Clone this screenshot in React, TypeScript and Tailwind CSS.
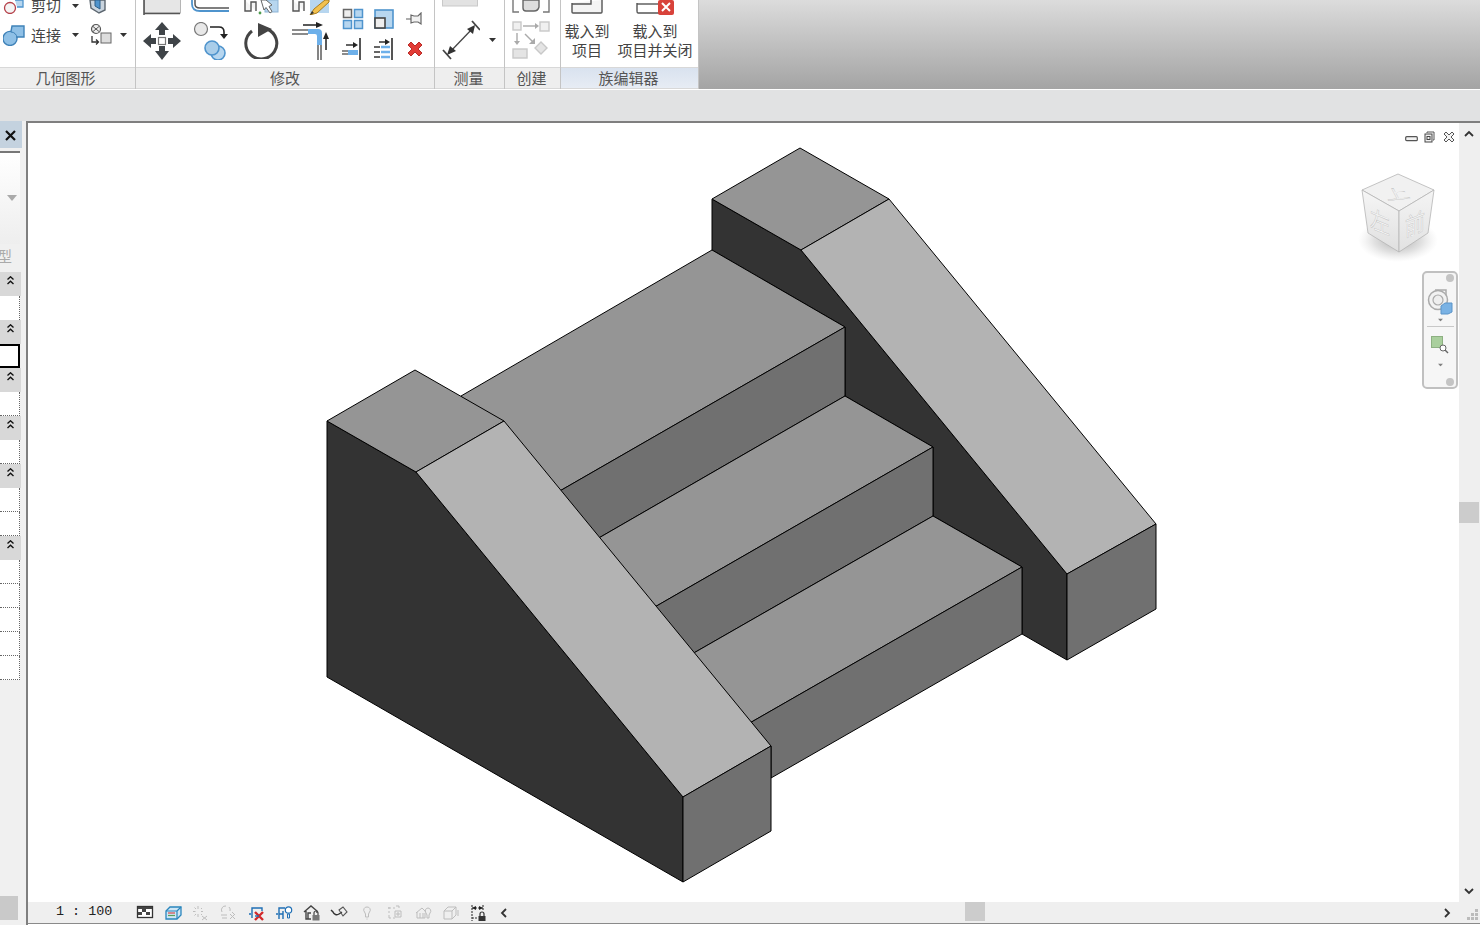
import React from "react";

const DARK = "#3f4448";
const BLUE = "#4f94cd";
const LBLUE = "#b7d6ef";

type P = { children: React.ReactNode; w: number; h: number; vb?: string; className?: string };
const Ic = ({ children, w, h, vb, className }: P) => (
  <svg width={w} height={h} viewBox={vb ?? `0 0 ${w} ${h}`} className={`block shrink-0 ${className ?? ""}`}>
    {children}
  </svg>
);

const Caret = ({ className }: { className?: string }) => (
  <svg width="7" height="4" viewBox="0 0 7 4" className={`block shrink-0 ${className ?? ""}`}>
    <path d="M0 0H7L3.5 4Z" fill="#333" />
  </svg>
);

const CutIcon = () => (
  <Ic w={22} h={14}>
    <circle cx="7" cy="8" r="5.5" fill="#f4f4f4" stroke="#b5414a" strokeWidth="1.3" />
    <path d="M12 0H20V7H14" fill={LBLUE} stroke={BLUE} strokeWidth="1.3" />
  </Ic>
);
const JoinIcon = () => (
  <Ic w={22} h={22}>
    <path d="M9 2H21V13H14V14A7 7 0 1 1 8 7.5Z" fill="#8fc0e6" stroke="#3f82b8" strokeWidth="1.4" />
    <path d="M8 8A6 6 0 0 1 14 14" fill="none" stroke="#3f82b8" strokeWidth="1" />
  </Ic>
);
const WallCutIcon = () => (
  <Ic w={20} h={14}>
    <path d="M2 0L3 8L11 13L17 10V0Z" fill="#c9d4de" stroke="#5d6770" strokeWidth="1.4" />
    <path d="M7 0V6L12 9V0Z" fill={BLUE} stroke="#2e5f88" strokeWidth="1" />
  </Ic>
);
const SplitFaceIcon = () => (
  <Ic w={22} h={24}>
    <circle cx="6" cy="6" r="4.5" fill="#eee" stroke="#555" strokeWidth="1.2" />
    <path d="M3 3.5L9 8.5M9 3.5L3 8.5" stroke="#555" />
    <rect x="11" y="10" width="10" height="10" fill="#ddd" stroke="#666" />
    <path d="M2 13V19H8M6 16.5L8.5 19L6 21.5" fill="none" stroke="#333" strokeWidth="1.3" />
  </Ic>
);

const AlignIcon = () => (
  <Ic w={38} h={15}>
    <rect x="1.5" y="-4" width="36" height="17" fill="#e6e6e6" stroke="#b5b5b5" />
    <path d="M1 0V15M1 13.5H37" stroke="#555" strokeWidth="1.6" fill="none" />
  </Ic>
);
const OffsetIcon = () => (
  <Ic w={38} h={15}>
    <path d="M4 0V4Q4 8 9 8H38" fill="none" stroke="#555" strokeWidth="1.5" />
    <path d="M1 0V4Q1 11 9 11H38" fill="none" stroke={BLUE} strokeWidth="1.8" />
  </Ic>
);
const MirrorPickIcon = () => (
  <Ic w={36} h={16}>
    <path d="M1 0V11H7V2H12V11" fill="#f4f4f4" stroke="#555" strokeWidth="1.4" />
    <rect x="21" y="0" width="13" height="12" fill={LBLUE} stroke="#8cb3d4" />
    <path d="M17 0L20 10L22 7.5L26 13L28 11.5L25 6.5L28 5L22 0Z" fill="#fff" stroke="#666" />
    <circle cx="16" cy="13" r="1.4" fill="#4e9c4e" />
  </Ic>
);
const MirrorDrawIcon = () => (
  <Ic w={38} h={15}>
    <path d="M1 0V11H7V2H12V11" fill="#f4f4f4" stroke="#555" strokeWidth="1.4" />
    <rect x="18" y="0" width="19" height="13" fill={LBLUE} />
    <path d="M33 0L22 9L18 15L25 13L37 2V0Z" fill="#f2c14e" stroke="#a97d1e" />
    <path d="M18 15L20 11L22 13Z" fill="#333" />
  </Ic>
);

const MoveIcon = () => (
  <Ic w={38} h={38}>
    <g fill={DARK}>
      <path d="M19 0L26 8H22V13H16V8H12Z" />
      <path d="M19 38L12 29H16V24H22V29H26Z" />
      <path d="M0 19L8 12V16H13V22H8V26Z" />
      <path d="M38 19L30 12V16H25V22H30V26Z" />
    </g>
    <rect x="15.5" y="15.5" width="7" height="7" fill="#fff" stroke="#777" strokeWidth="1.2" />
  </Ic>
);
const CopyIcon = () => (
  <Ic w={38} h={38}>
    <circle cx="9" cy="7" r="6.5" fill="#e8e8e8" stroke="#777" strokeWidth="1.2" />
    <path d="M18 5H27Q32 5 32 10V13" fill="none" stroke="#222" strokeWidth="1.6" />
    <path d="M28 12H36L32 17Z" fill="#222" />
    <circle cx="26" cy="31" r="7" fill={LBLUE} stroke={BLUE} strokeWidth="1.6" />
    <circle cx="20" cy="26" r="7" fill="#a9cde9" stroke={BLUE} strokeWidth="1.6" />
  </Ic>
);
const RotateIcon = () => (
  <Ic w={36} h={37}>
    <path d="M9 9A15.5 15.5 0 1 0 24 7" fill="none" stroke="#444" strokeWidth="3" />
    <path d="M15 1L29 7L15 15Z" fill="#444" />
  </Ic>
);
const TrimIcon = () => (
  <Ic w={40} h={38}>
    <path d="M0 8H16M0 12H16" stroke="#666" strokeWidth="1.6" />
    <path d="M16 7H26Q30 7 30 11V23H25V14Q25 12 23 12H16Z" fill="#6db0ea" />
    <path d="M26 23V38M29 23V38" stroke="#666" strokeWidth="1.6" />
    <path d="M11 3H26" stroke="#222" strokeWidth="1.5" />
    <path d="M24 0L31 3L24 6Z" fill="#222" />
    <path d="M34 14V28" stroke="#222" strokeWidth="1.5" />
    <path d="M31 17L34 10L37 17Z" fill="#222" />
  </Ic>
);
const ArrayIcon = () => (
  <Ic w={22} h={22}>
    <rect x="1.5" y="1.5" width="8" height="8" fill="#eee" stroke="#666" strokeWidth="1.5" />
    <rect x="12.5" y="1.5" width="8" height="8" fill={LBLUE} stroke={BLUE} strokeWidth="1.5" />
    <rect x="1.5" y="12.5" width="8" height="8" fill={LBLUE} stroke={BLUE} strokeWidth="1.5" />
    <rect x="12.5" y="12.5" width="8" height="8" fill={LBLUE} stroke={BLUE} strokeWidth="1.5" />
  </Ic>
);
const ScaleIcon = () => (
  <Ic w={20} h={20}>
    <rect x="1" y="1" width="18" height="18" fill={LBLUE} stroke={BLUE} strokeWidth="1.6" />
    <rect x="1" y="9" width="10" height="10" fill="#eee" stroke="#444" strokeWidth="1.6" />
  </Ic>
);
const PinIcon = () => (
  <Ic w={17} h={14}>
    <path d="M0 7H5" stroke="#777" strokeWidth="1.2" />
    <path d="M5 3L8 4H12L15 1V12L12 10H8L5 11Z" fill="#f2f2f2" stroke="#666" strokeWidth="1.2" />
  </Ic>
);
const TrimSingleIcon = () => (
  <Ic w={20} h={22}>
    <path d="M18 0V22" stroke="#555" strokeWidth="2" />
    <path d="M4 7H13" stroke="#222" strokeWidth="1.4" />
    <path d="M11 4L16 7L11 10Z" fill="#222" />
    <path d="M0 13H6M0 16H6" stroke="#666" strokeWidth="1.5" />
    <rect x="6" y="12" width="10" height="5" fill="#6db0ea" />
  </Ic>
);
const TrimMultiIcon = () => (
  <Ic w={20} h={22}>
    <path d="M18 0V22" stroke="#555" strokeWidth="2" />
    <path d="M5 4H13" stroke="#222" strokeWidth="1.4" />
    <path d="M11 1L16 4L11 7Z" fill="#222" />
    <path d="M0 9H6M0 14H6M0 19H6" stroke="#666" strokeWidth="1.8" />
    <path d="M7 9H16M7 14H16M7 19H16" stroke="#6db0ea" strokeWidth="2.5" />
  </Ic>
);
const DeleteIcon = () => (
  <Ic w={18} h={18}>
    <path d="M2 5L5 2L9 6L13 2L16 5L12 9L16 13L13 16L9 12L5 16L2 13L6 9Z" fill="#e23c36" stroke="#b92c28" />
  </Ic>
);
const MeasureTopIcon = () => (
  <Ic w={36} h={7}>
    <rect x="0.5" y="-4" width="35" height="10" fill="#e2e2e2" stroke="#c9c9c9" />
  </Ic>
);
const MeasureIcon = () => (
  <Ic w={38} h={40}>
    <path d="M30 1L38 10M1 30L9 39" stroke="#444" strokeWidth="1.8" />
    <path d="M7 33L32 7" stroke="#444" strokeWidth="1.3" />
    <path d="M33 5L31 14L25 9Z" fill="#333" />
    <path d="M5 35L8 26L14 31Z" fill="#333" />
  </Ic>
);
const CreateTopIcon = () => (
  <Ic w={38} h={14}>
    <path d="M1 0V12H7M37 0V12H31" fill="none" stroke="#777" strokeWidth="1.4" />
    <path d="M11 0V8Q11 11 14 11H22Q26 11 27 7V0Z" fill="#ddd" stroke="#666" strokeWidth="1.4" />
  </Ic>
);
const CreateIcon = () => (
  <Ic w={38} h={38}>
    <g fill="#f0f0f0" stroke="#c8c8c8" strokeWidth="1.4">
      <rect x="1" y="1" width="8" height="8" />
      <rect x="28" y="1" width="9" height="9" />
      <rect x="1" y="28" width="14" height="9" fill="#e4e4e4" />
      <path d="M29 21L35 27L29 33L23 27Z" fill="#e4e4e4" />
    </g>
    <g stroke="#aaa" strokeWidth="1.4" fill="#aaa">
      <path d="M11 5H24" fill="none" />
      <path d="M23 2L27 5L23 8Z" stroke="none" />
      <path d="M5 12V21" fill="none" />
      <path d="M2 20L5 24L8 20Z" stroke="none" />
      <path d="M13 13L22 22" fill="none" />
      <path d="M23 17V23H17Z" stroke="none" />
    </g>
  </Ic>
);
const LoadIcon = () => (
  <Ic w={32} h={14}>
    <path d="M1 3V12Q1 13 2 13H30Q31 13 31 12V0" fill="#f4f4f4" stroke="#555" strokeWidth="1.4" />
    <path d="M1 4H20V0" fill="none" stroke="#555" strokeWidth="1.4" />
  </Ic>
);
const LoadCloseIcon = () => (
  <Ic w={40} h={18}>
    <path d="M1 3V11Q1 13 2 13H24" fill="none" stroke="#555" strokeWidth="1.4" />
    <path d="M1 4H22" fill="none" stroke="#555" strokeWidth="1.4" />
    <rect x="22" y="0" width="16" height="15" rx="2" fill="#d8423a" />
    <path d="M26 3L34 11M34 3L26 11" stroke="#fff" strokeWidth="2" />
  </Ic>
);

const Big = ({ children, ml }: { children: React.ReactNode; ml: string }) => <div className={ml}>{children}</div>;

const Panel = ({
  title,
  w,
  blue,
  pr,
  children,
}: {
  title: string;
  w: string;
  blue?: boolean;
  pr?: string;
  children: React.ReactNode;
}) => (
  <div className={`${w} shrink-0 flex flex-col border-r border-[#c4c4c4] bg-white`}>
    <div className="h-[67px] overflow-hidden">{children}</div>
    <div
      className={`h-[22px] pb-[2px] flex items-center justify-center text-[15px] leading-none text-[#555] border-t border-b border-[#d8d8d8] ${pr ?? ""} ${
        blue ? "bg-gradient-to-b from-[#d9e2ef] to-[#e7ecf4]" : "bg-[#eeeeee]"
      }`}
    >
      {title}
    </div>
  </div>
);

const Chevrons = () => (
  <svg width="7" height="9" viewBox="0 0 7 9" className="block">
    <path d="M0.5 3.5L3.5 0.8L6.5 3.5M0.5 8L3.5 5.3L6.5 8" fill="none" stroke="#111" strokeWidth="1.4" />
  </svg>
);
const Section = () => (
  <div className="h-[24px] w-[21px] bg-[#d8d8d8] pt-[4px] pl-[7px]">
    <Chevrons />
  </div>
);
const Row = ({ last }: { last?: boolean }) => (
  <div className={`h-[24px] w-[20px] bg-white border-r border-dotted border-[#666] ${last ? "" : "border-b"}`} />
);

const MODEL = {
  leftTop: "327,421 415,370 504,421 416,472",
  leftSlope: "416,472 504,421 771,746 683,797",
  leftEnd: "683,797 771,746 771,831 683,882",
  leftSide: "327,421 416,472 683,797 683,882 327,677",
  rightTop: "712,199 800,148 889,199 801,250",
  rightSlope: "801,250 889,199 1156,524 1067,574",
  rightEnd: "1067,574 1156,524 1156,609 1067,660",
  rightSide: "712,199 801,250 1067,574 1067,660 1022,634 1022,567 933,516 933,447 845,396 845,327 712,250",
  tread1: "461,396 712,250 845,327 558,492",
  riser1: "558,492 845,327 845,396 597,539",
  tread2: "597,539 845,396 933,447 653,608",
  riser2: "653,608 933,447 933,516 692,654",
  tread3: "692,654 933,516 1022,567 748,724",
  riser3: "748,724 1022,567 1022,634 771,778 771,746",
};

const Face = ({ p, c }: { p: string; c: string }) => (
  <polygon points={p} fill={c} stroke="#000" strokeWidth="1" strokeLinejoin="round" />
);

const Stair = () => (
  <svg width="1431" height="779" viewBox="28 123 1431 779" className="absolute left-0 top-0">
    <Face p={MODEL.rightSide} c="#333333" />
    <Face p={MODEL.tread1} c="#959595" />
    <Face p={MODEL.riser1} c="#707070" />
    <Face p={MODEL.tread2} c="#959595" />
    <Face p={MODEL.riser2} c="#707070" />
    <Face p={MODEL.tread3} c="#959595" />
    <Face p={MODEL.riser3} c="#707070" />
    <Face p={MODEL.rightTop} c="#959595" />
    <Face p={MODEL.rightSlope} c="#b3b3b3" />
    <Face p={MODEL.rightEnd} c="#707070" />
    <Face p={MODEL.leftSide} c="#333333" />
    <Face p={MODEL.leftTop} c="#959595" />
    <Face p={MODEL.leftSlope} c="#b3b3b3" />
    <Face p={MODEL.leftEnd} c="#707070" />
  </svg>
);

const ViewCube = () => (
  <svg width="100" height="100" viewBox="1350 170 100 100" className="absolute left-[1322px] top-[47px]">
    <defs>
      <radialGradient id="sh">
        <stop offset="0" stopColor="#888" stopOpacity="0.75" />
        <stop offset="0.6" stopColor="#aaa" stopOpacity="0.35" />
        <stop offset="1" stopColor="#ccc" stopOpacity="0" />
      </radialGradient>
      <linearGradient id="lf" x1="0" y1="0" x2="0" y2="1">
        <stop offset="0" stopColor="#f6f6f6" />
        <stop offset="1" stopColor="#dfdfdf" />
      </linearGradient>
      <linearGradient id="rf" x1="0" y1="0" x2="0" y2="1">
        <stop offset="0" stopColor="#f4f4f4" />
        <stop offset="1" stopColor="#e2e2e2" />
      </linearGradient>
    </defs>
    <ellipse cx="1398" cy="240" rx="40" ry="22" fill="url(#sh)" />
    <polygon points="1398,174 1434,190 1399,211 1362,190" fill="#f1f1f1" stroke="#b5b5b5" strokeWidth="0.8" />
    <polygon points="1362,190 1399,211 1399,252 1368,233" fill="url(#lf)" stroke="#b5b5b5" strokeWidth="0.8" />
    <polygon points="1434,190 1399,211 1399,252 1428,233" fill="url(#rf)" stroke="#b5b5b5" strokeWidth="0.8" />
    <g fontSize="24" fill="#f2f2f2" stroke="#a8a8a8" strokeWidth="0.25" textAnchor="middle">
      <text transform="matrix(1 -0.1 0.3 0.55 1399 199)">上</text>
      <text transform="matrix(0.85 0.35 0 1 1380 231)">左</text>
      <text transform="matrix(0.85 -0.35 0 1 1415 233)">前</text>
    </g>
  </svg>
);

const WindowControls = () => (
  <div className="absolute right-[4px] top-[8px] flex items-center gap-[6px]">
    <svg width="13" height="6" viewBox="0 0 13 6" className="mt-[3px]">
      <rect x="0.7" y="0.7" width="11.6" height="4" rx="1" fill="#f2f2f2" stroke="#555" strokeWidth="1.2" />
    </svg>
    <svg width="11" height="12" viewBox="0 0 11 12">
      <path d="M3 2V1H10V9H9" fill="none" stroke="#555" />
      <rect x="1" y="3" width="7" height="8" fill="#f2f2f2" stroke="#444" />
      <rect x="3" y="5.5" width="3" height="3" fill="none" stroke="#444" />
    </svg>
    <svg width="12" height="12" viewBox="0 0 12 12" className="ml-[2px]">
      <path d="M1 3L3 1L6 4L9 1L11 3L8 6L11 9L9 11L6 8L3 11L1 9L4 6Z" fill="#f4f4f4" stroke="#555" />
    </svg>
  </div>
);

const NavBar = () => (
  <div className="absolute left-[1394px] top-[148px] w-[36px] h-[118px] rounded-[5px] border-2 border-[#c0c0c0] bg-[#f6f6f6] flex flex-col items-center">
    <div className="self-end mr-[2px] mt-[1px] w-[8px] h-[8px] rounded-full bg-[#c4c4c4]" />
    <svg width="26" height="26" viewBox="0 0 26 26" className="mt-[7px]">
      <path d="M8 1H19V14" fill="none" stroke="#aaa" strokeWidth="1.5" />
      <circle cx="11" cy="11" r="9.5" fill="#f2f2f2" stroke="#aaa" strokeWidth="1.5" />
      <circle cx="11" cy="11" r="5" fill="#eee" stroke="#aaa" strokeWidth="1.2" />
      <path d="M14 17L18 14H25V23L21 25H14Z" fill="#7ab2e4" stroke="#5b94c8" />
    </svg>
    <Caret className="mt-[3px] scale-75 opacity-60" />
    <div className="w-[27px] h-px bg-[#c8c8c8] mt-[4px]" />
    <svg width="18" height="18" viewBox="0 0 18 18" className="mt-[9px]">
      <rect x="0.5" y="0.5" width="11" height="11" fill="#a9cf9d" stroke="#8db082" />
      <circle cx="12" cy="12" r="3" fill="#fff" stroke="#666" />
      <path d="M14 14L17 17" stroke="#666" strokeWidth="1.4" />
    </svg>
    <Caret className="mt-[9px] scale-75 opacity-60" />
    <div className="mt-auto mb-[1px] self-end mr-[2px] w-[8px] h-[8px] rounded-full bg-[#c4c4c4]" />
  </div>
);

const Sb = ({ d, children }: { d?: string; children?: React.ReactNode }) => (
  <svg width="20" height="20" viewBox="0 0 20 20" className="block">
    {d ? <path d={d} fill="none" stroke="#bdbdbd" strokeWidth="1" /> : children}
  </svg>
);

const statusIcons: React.ReactNode[] = [
  <Sb key="1">
    <rect x="2.5" y="3.5" width="15" height="11" fill="#fff" stroke="#333" strokeWidth="1.3" />
    <path d="M3 4H17V6H3ZM7 6H11V9H7ZM3 9H7V12H3ZM11 9H15V12H11Z" fill="#444" />
  </Sb>,
  <Sb key="2">
    <path d="M3 8L7 4H18V12L14 16H3Z" fill="#cfe6f5" stroke="#2a86bd" strokeWidth="1.3" />
    <path d="M3 8H14V16M14 8L18 4" fill="none" stroke="#2a86bd" strokeWidth="1.2" />
    <path d="M5 10H12" stroke="#d64a4a" strokeWidth="1.2" />
    <path d="M5 12.5H12" stroke="#5a9e5a" strokeWidth="1.2" />
  </Sb>,
  <Sb key="3" d="M8 3V6M8 11V14M3 8.5H5.5M11 8.5H13M4.5 4.5L6 6M11 11L12 12M4.5 12.5L6 11M11 6L12 5M12 13L17 17M17 13L12 17" />,
  <Sb key="4" d="M8 3A4 4 0 0 0 4 9M11 4A4 4 0 0 1 12 8M3 12H9M4 15H9M12 11L17 16M17 11L12 16M14 9L17 12" />,
  <Sb key="5">
    <path d="M3 11H5M6 15V5H16V8M6 5" fill="none" stroke="#1f6fb5" strokeWidth="1.4" />
    <path d="M9 9L17 17M17 9L9 17" stroke="#d2282a" strokeWidth="2.4" />
    <path d="M9 13H13" stroke="#1f6fb5" strokeWidth="1.4" />
  </Sb>,
  <Sb key="6">
    <path d="M2 11H4M5 16V5H11M5 11H9M9 16V8" fill="none" stroke="#1f6fb5" strokeWidth="1.4" />
    <circle cx="14.5" cy="7" r="3.2" fill="#fff" stroke="#1f6fb5" strokeWidth="1.2" />
    <path d="M13.5 11H15.5V15H13.5Z" fill="none" stroke="#1f6fb5" />
  </Sb>,
  <Sb key="7">
    <path d="M2 9L9 3L15 8V10M4 8V16H9M6 16V10H9" fill="none" stroke="#444" strokeWidth="1.4" />
    <rect x="10.5" y="12" width="7" height="5.5" fill="#777" />
    <path d="M12 12V10A2 2 0 0 1 16 10V12" fill="none" stroke="#444" strokeWidth="1.2" />
  </Sb>,
  <Sb key="8">
    <path d="M2 7L4 9A4 4 0 0 0 10 11L13 9" fill="none" stroke="#333" strokeWidth="1.4" />
    <path d="M10 7L14 4L18 9L14 13Z" fill="none" stroke="#555" strokeWidth="1.1" />
  </Sb>,
  <Sb key="9" d="M10 4A3 3 0 0 1 12.5 9L11.5 11V14H8.5V11L7.5 9A3 3 0 0 1 10 4M9.5 16H10.5" />,
  <Sb key="10" d="M4 4V6M4 8V10M4 12V15H6M8 15H10M3 5H6M8 5H10M11 3L14 3V5M10 8H16V14H10ZM12 10H14V12H12Z" />,
  <Sb key="11" d="M3 10L9 5L13 9M4 9V15H12V10M7 15V10M10 15V10M15 5A3 3 0 0 1 17 10L16 12V15H14V12L13 10A3 3 0 0 1 15 5" />,
  <Sb key="12" d="M3 8L7 4H15V12L11 16H3ZM3 8H11V16M11 8L15 4M17 7V13" />,
  <Sb key="13">
    <path d="M4 2V18M15 2V8M4 5H15M4 15H9" fill="none" stroke="#333" strokeWidth="1.1" strokeDasharray="2 1" />
    <path d="M4 5L8 3V7ZM15 5L11 3V7Z" fill="#222" />
    <rect x="10.5" y="13" width="7" height="5" fill="#333" />
    <path d="M12 13V11A2 2 0 0 1 16 11V13" fill="none" stroke="#333" strokeWidth="1.2" />
  </Sb>,
];

const Chev = ({ d }: { d: string }) => (
  <svg width="10" height="10" viewBox="0 0 10 10" className="block shrink-0">
    <path d={d} fill="none" stroke="#333" strokeWidth="1.8" />
  </svg>
);

export default function App() {
  return (
    <div className="w-[1480px] h-[925px] overflow-hidden flex flex-col bg-white font-['Noto_Sans_CJK_SC','Liberation_Sans',sans-serif]">
      {/* Ribbon */}
      <div className="h-[90px] flex shrink-0 border-b border-white">
        <Panel title="几何图形" w="w-[136px]" pr="pr-[4px]">
          <div className="flex items-start h-[23px] pl-[3px]">
            <CutIcon />
            <span className="ml-[6px] text-[15px] leading-[15px] -mt-[3px] text-[#444]">剪切</span>
            <Caret className="ml-[11px] mt-[4px]" />
            <Big ml="ml-[9px]"><WallCutIcon /></Big>
          </div>
          <div className="flex items-center h-[24px] pl-[3px]">
            <JoinIcon />
            <span className="ml-[6px] text-[15px] leading-none text-[#444] -mt-[1px]">连接</span>
            <Caret className="ml-[11px]" />
            <div className="ml-[11px]">
              <SplitFaceIcon />
            </div>
            <Caret className="ml-[8px]" />
          </div>
        </Panel>
        <Panel title="修改" w="w-[299px]">
          <div className="flex pl-[7px]">
            <div className="w-[196px]">
              <div className="flex h-[22px]">
                <AlignIcon />
                <Big ml="ml-[10px]"><OffsetIcon /></Big>
                <Big ml="ml-[15px]"><MirrorPickIcon /></Big>
                <Big ml="ml-[12px]"><MirrorDrawIcon /></Big>
              </div>
              <div className="flex items-start">
                <MoveIcon />
                <Big ml="ml-[11px]"><CopyIcon /></Big>
                <Big ml="ml-[13px]"><RotateIcon /></Big>
                <Big ml="ml-[13px]"><TrimIcon /></Big>
              </div>
            </div>
            <div className="pt-[8px] pl-[3px]">
              <div className="flex items-center h-[22px]">
                <ArrayIcon />
                <Big ml="ml-[10px]"><ScaleIcon /></Big>
                <Big ml="ml-[12px]"><PinIcon /></Big>
              </div>
              <div className="flex items-center h-[22px] mt-[8px]">
                <TrimSingleIcon />
                <Big ml="ml-[12px]"><TrimMultiIcon /></Big>
                <Big ml="ml-[12px]"><DeleteIcon /></Big>
              </div>
            </div>
          </div>
        </Panel>
        <Panel title="测量" w="w-[70px]" pr="pr-[2px]">
          <div className="pl-[7px]">
            <MeasureTopIcon />
            <div className="flex items-center mt-[13px]">
              <MeasureIcon />
              <Caret className="ml-[9px]" />
            </div>
          </div>
        </Panel>
        <Panel title="创建" w="w-[56px]" pr="pr-[2px]">
          <div className="pl-[7px]">
            <CreateTopIcon />
            <div className="mt-[7px]">
              <CreateIcon />
            </div>
          </div>
        </Panel>
        <Panel title="族编辑器" w="w-[138px]" blue pr="pr-[2px]">
          <div className="flex text-[15px] leading-[20px] text-[#444] text-center">
            <div className="w-[60px] ml-[-4px] flex flex-col items-center">
              <LoadIcon />
              <span className="mt-[7px]">载入到</span>
              <span className="-mt-[1px]">项目</span>
            </div>
            <div className="w-[80px] -ml-[2px] flex flex-col items-center">
              <div className="h-[14px] overflow-visible ml-[2px]">
                <LoadCloseIcon />
              </div>
              <span className="mt-[7px]">载入到</span>
              <span className="-mt-[1px]">项目并关闭</span>
            </div>
          </div>
        </Panel>
        <div className="flex-1 bg-gradient-to-b from-[#dcdcdc] to-[#a4a4a4]" />
      </div>

      {/* Grey strip */}
      <div className="h-[31px] shrink-0 bg-[#e1e2e3]" />

      {/* Body */}
      <div className="flex-1 flex min-h-0">
        {/* Left properties panel */}
        <div className="w-[26px] shrink-0 bg-[#f0f0f0] flex flex-col">
          <div className="h-[27px] w-[22px] bg-[#c4d2df] flex items-center justify-center pr-[1px] pt-[1px]">
            <svg width="11" height="11" viewBox="0 0 11 11">
              <path d="M1 1L10 10M10 1L1 10" stroke="#111" strokeWidth="2.2" />
            </svg>
          </div>
          <div className="h-[93px] w-[20px] mt-[3px] border-t-2 border-[#777] bg-gradient-to-b from-white to-[#eeeeee] flex items-center justify-end pr-[3px] pb-[2px]">
            <svg width="10" height="6" viewBox="0 0 10 6">
              <path d="M0 0H10L5 6Z" fill="#aaa" />
            </svg>
          </div>
          <div className="h-[28px] w-[20px] overflow-hidden flex items-start pt-[4px] text-[15px] text-[#aaa] leading-none">
            <span className="-ml-[3px]">型</span>
          </div>
          <Section />
          <Row last />
          <Section />
          <div className="h-[24px] w-[20px] bg-white border-2 border-l-0 border-black" />
          <Section />
          <Row />
          <Section />
          <Row />
          <Section />
          <Row />
          <Row />
          <Section />
          <Row />
          <Row />
          <Row />
          <Row />
          <Row />
          <div className="flex-1" />
          <div className="h-[24px] w-[18px] bg-[#c9c9c9] mb-[5px]" />
        </div>

        {/* Main view */}
        <div className="flex-1 min-w-0 flex flex-col border-l-2 border-t-2 border-[#7f7f7f]">
          <div className="flex-1 min-h-0 flex">
            <div className="relative flex-1 min-w-0 bg-white">
              <Stair />
              <ViewCube />
              <WindowControls />
              <NavBar />
            </div>
            <div className="w-[21px] shrink-0 bg-[#efefef] flex flex-col items-center justify-between py-[6px] pr-[1px]">
              <Chev d="M1 7L5 3L9 7" />
              <div className="w-[20px] h-[21px] bg-[#cccccc]" />
              <Chev d="M1 3L5 7L9 3" />
            </div>
          </div>
          <div className="h-[21px] shrink-0 bg-[#efefef] flex items-center relative">
            <span className="ml-[28px] w-[75px] font-['Liberation_Mono',monospace] text-[13.4px] text-[#222]">1 : 100</span>
            {statusIcons.map((ic, i) => (
              <div key={i} className="w-[27.8px] flex justify-center">
                {ic}
              </div>
            ))}
            <div className="ml-[7px]"><Chev d="M7 1L3 5L7 9" /></div>
            <div className="ml-[456px] w-[20px] h-[19px] self-start bg-[#cccccc]" />
            <div className="ml-auto mr-[28px]"><Chev d="M3 1L7 5L3 9" /></div>
            <svg width="12" height="12" viewBox="0 0 12 12" className="absolute right-[1px] top-[6px]">
              <g fill="#bbb">
                <rect x="8" y="1" width="3" height="3" />
                <rect x="4" y="5" width="3" height="3" />
                <rect x="8" y="5" width="3" height="3" />
                <rect x="0" y="9" width="3" height="3" />
                <rect x="4" y="9" width="3" height="3" />
                <rect x="8" y="9" width="3" height="3" />
              </g>
            </svg>
          </div>
          <div className="h-[2px] shrink-0 bg-[#8a8a8a] border-b border-white" />
        </div>
      </div>
    </div>
  );
}
